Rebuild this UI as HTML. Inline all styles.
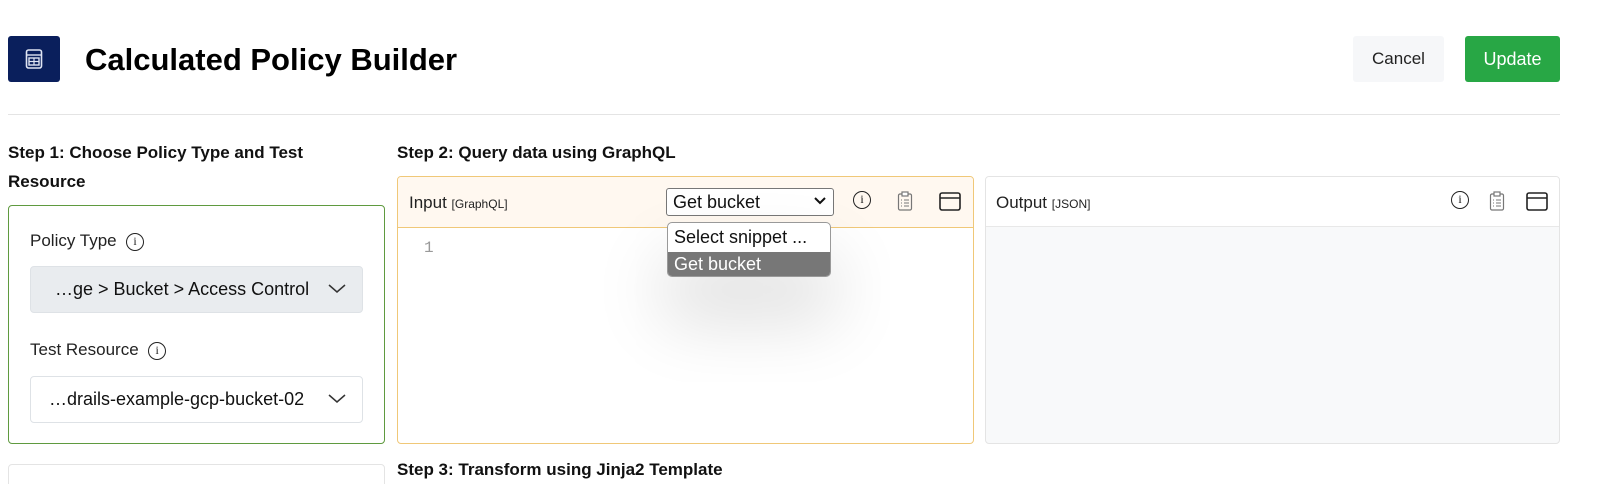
<!DOCTYPE html>
<html style="overflow:hidden"><head><style>
*{box-sizing:border-box;margin:0;padding:0}
html,body{width:1600px;height:484px;overflow:hidden}
body{background:#fff;font-family:"Liberation Sans",sans-serif;color:#111;position:relative}
.a{position:absolute}
.lbl{font-size:17px;color:#222}
.ic{display:inline-block;width:18px;height:18px;border:1.5px solid #222;border-radius:50%;font:12px "Liberation Serif",serif;text-align:center;line-height:15px;vertical-align:middle}
</style></head><body>
<div class="a" style="left:8px;top:36px;width:52px;height:46px;background:#0a1f5c;border-radius:3px">
<svg class="a" style="left:17px;top:13px" width="18" height="20" viewBox="0 0 18 20"><rect x="1.5" y="1" width="15" height="18" rx="2" fill="none" stroke="#dfe4f2" stroke-width="1.6"/><line x1="2" y1="6" x2="16" y2="6" stroke="#dfe4f2" stroke-width="1.4"/><rect x="4" y="9" width="10" height="7" fill="none" stroke="#dfe4f2" stroke-width="1.4"/><line x1="9" y1="9" x2="9" y2="16" stroke="#dfe4f2" stroke-width="1.2"/><line x1="4" y1="12.5" x2="14" y2="12.5" stroke="#dfe4f2" stroke-width="1.2"/></svg></div>
<div class="a" style="left:85px;top:42px;font-size:31px;font-weight:bold;color:#000">Calculated Policy Builder</div>
<div class="a" style="left:1353px;top:36px;width:91px;height:46px;background:#f6f7f9;border-radius:3px;font-size:17px;text-align:center;line-height:46px;color:#222">Cancel</div>
<div class="a" style="left:1465px;top:36px;width:95px;height:46px;background:#28a745;border-radius:3px;font-size:18px;text-align:center;line-height:46px;color:#fff">Update</div>
<div class="a" style="left:8px;top:114px;width:1552px;height:1px;background:#e4e4e4"></div>
<div class="a" style="left:8px;top:138px;font-size:17px;font-weight:bold;line-height:29px;width:330px">Step 1: Choose Policy Type and Test Resource</div>
<div class="a" style="left:397px;top:140px;font-size:17px;font-weight:bold;line-height:26px">Step 2: Query data using GraphQL</div>
<div class="a" style="left:8px;top:205px;width:377px;height:239px;border:1px solid #5f9a3f;border-radius:4px"></div>
<div class="a lbl" style="left:30px;top:231px">Policy Type &nbsp;<span class="ic">i</span></div>
<div class="a" style="left:30px;top:266px;width:333px;height:47px;background:#e9ecef;border:1px solid #dee2e6;border-radius:4px;font-size:18px;line-height:45px;padding-left:24px">…ge &gt; Bucket &gt; Access Control</div>
<div class="a lbl" style="left:30px;top:340px">Test Resource &nbsp;<span class="ic">i</span></div>
<div class="a" style="left:30px;top:376px;width:333px;height:47px;background:#fff;border:1px solid #dee2e6;border-radius:4px;font-size:18px;line-height:45px;padding-left:18px">…drails-example-gcp-bucket-02</div>
<svg class="a" style="left:328px;top:283px" width="18" height="12"><path d="M1 2l8 7 8-7" fill="none" stroke="#333" stroke-width="1.5"/></svg>
<svg class="a" style="left:328px;top:393px" width="18" height="12"><path d="M1 2l8 7 8-7" fill="none" stroke="#333" stroke-width="1.5"/></svg>
<div class="a" style="left:8px;top:464px;width:377px;height:40px;border:1px solid #e4e4e4;border-radius:4px"></div>
<div class="a" style="left:397px;top:176px;width:577px;height:268px;border:1px solid #f0c878;border-radius:4px;overflow:hidden">
<div style="height:51px;background:#fff8f0;border-bottom:1px solid #f0c878"></div></div>
<div class="a" style="left:409px;top:193px;font-size:17px;color:#222">Input <span style="font-size:12px">[GraphQL]</span></div>
<div class="a" style="left:666px;top:188px;width:168px;height:28px;border:1px solid #777;border-radius:3px;background:#fff;font-size:18px;line-height:26px;padding-left:6px">Get bucket</div>
<svg class="a" style="left:814px;top:197px" width="12" height="9"><path d="M1 1l5 5 5-5" fill="none" stroke="#111" stroke-width="2"/></svg>
<div class="a" style="left:424px;top:239px;font-family:'Liberation Mono',monospace;font-size:16px;color:#999">1</div>
<div class="a" style="left:985px;top:176px;width:575px;height:268px;border:1px solid #e4e4e4;border-radius:4px;overflow:hidden;background:#f8f9fa">
<div style="height:50px;background:#fff;border-bottom:1px solid #e8e8e8"></div></div>
<div class="a" style="left:996px;top:193px;font-size:17px;color:#222">Output <span style="font-size:12px">[JSON]</span></div>
<div class="a" style="left:853px;top:191px"><span class="ic">i</span></div>
<div class="a" style="left:1451px;top:191px"><span class="ic">i</span></div>
<svg class="a" style="left:897px;top:191px" width="16" height="20"><rect x="1.5" y="3" width="13" height="16" rx="1.5" fill="none" stroke="#777" stroke-width="1.2"/><rect x="5" y="1" width="6" height="4" fill="#fff" stroke="#777" stroke-width="1.2"/><path d="M4 9h1M7 9h5M4 12h1M7 12h5M4 15h1M7 15h5" stroke="#777" stroke-width="1.1"/></svg>
<svg class="a" style="left:1489px;top:191px" width="16" height="20"><rect x="1.5" y="3" width="13" height="16" rx="1.5" fill="none" stroke="#777" stroke-width="1.2"/><rect x="5" y="1" width="6" height="4" fill="#fff" stroke="#777" stroke-width="1.2"/><path d="M4 9h1M7 9h5M4 12h1M7 12h5M4 15h1M7 15h5" stroke="#777" stroke-width="1.1"/></svg>
<svg class="a" style="left:939px;top:192px" width="22" height="19"><rect x="1" y="1" width="20" height="17" rx="2" fill="none" stroke="#222" stroke-width="1.6"/><line x1="1" y1="6" x2="21" y2="6" stroke="#222" stroke-width="1.4"/></svg>
<svg class="a" style="left:1526px;top:192px" width="22" height="19"><rect x="1" y="1" width="20" height="17" rx="2" fill="none" stroke="#222" stroke-width="1.6"/><line x1="1" y1="6" x2="21" y2="6" stroke="#222" stroke-width="1.4"/></svg>
<div class="a" style="left:667px;top:222px;width:164px;height:55px;border:1px solid #999;border-radius:5px;overflow:hidden;background:#fff;box-shadow:0 40px 70px 5px rgba(0,0,0,.13)">
<div style="height:29px;font-size:18px;line-height:29px;padding-left:6px">Select snippet ...</div>
<div style="height:26px;background:#777;color:#fff;font-size:18px;line-height:25px;padding-left:6px">Get bucket</div></div>
<div class="a" style="left:397px;top:460px;font-size:17px;font-weight:bold">Step 3: Transform using Jinja2 Template</div>
</body></html>
